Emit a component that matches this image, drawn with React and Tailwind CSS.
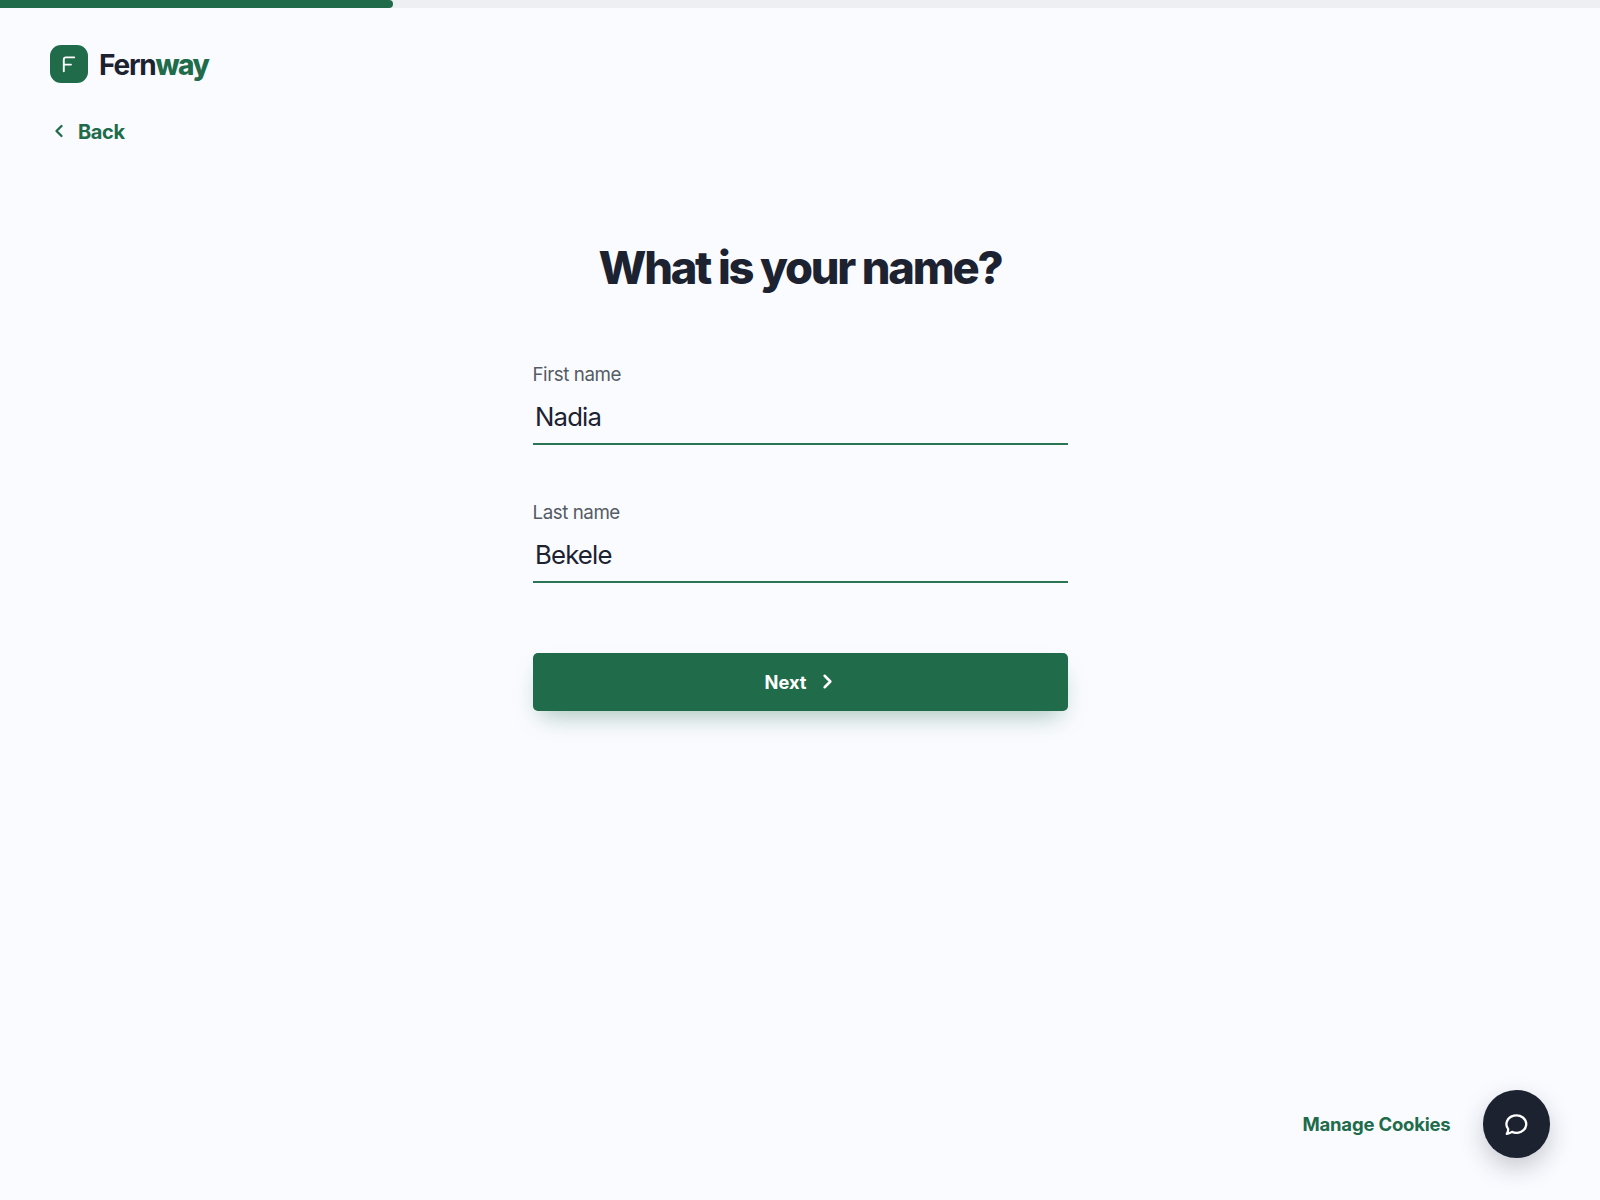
import React, { useState } from 'react';

const Chevron = ({ direction, className }) => (
  <svg viewBox="0 0 24 24" fill="none" stroke="currentColor" strokeLinecap="round" strokeLinejoin="round" className={className}>
    <path d={direction === 'left' ? 'm15 18-6-6 6-6' : 'm9 18 6-6-6-6'} />
  </svg>
);

const Field = ({ id, label, value, onChange }) => (
  <div className="flex flex-col">
    <label htmlFor={id} className="text-[18.75px] leading-[25px] tracking-[-0.45px] text-[#555c66]">{label}</label>
    <input
      id={id}
      type="text"
      value={value}
      onChange={(e) => onChange(e.target.value)}
      className="mt-[7.5px] h-[50.5px] w-full border-b-2 border-[#2a7553] bg-transparent px-[2.5px] pb-[4px] text-[25.75px] tracking-[-0.85px] text-[#1c2230] outline-none"
    />
  </div>
);

const App = () => {
  const [firstName, setFirstName] = useState('Nadia');
  const [lastName, setLastName] = useState('Bekele');

  return (
    <div className="flex h-screen flex-col overflow-hidden bg-[#fafbff] font-['Inter',sans-serif] text-[#1c2230]">
      {/* Progress */}
      <div className="h-[7.5px] w-full shrink-0 bg-[#eeeff2]">
        <div className="h-full w-[392.5px] rounded-r-[4px] bg-[#206c4a]" />
      </div>

      <header className="flex flex-col items-start px-[50px] pt-[37.5px]">
        <div className="flex h-[37.5px] items-center gap-[11.5px]">
          <div className="size-[37.5px] rounded-[11px] bg-[#206c4a] text-white">
            <svg viewBox="0 0 37.5 37.5" fill="none" stroke="currentColor" strokeWidth="1.9" strokeLinecap="round" strokeLinejoin="round" className="size-full">
              <path d="M13.8 26.2V14.4a2 2 0 0 1 2-2h8.4M13.8 19.6h7.2" />
            </svg>
          </div>
          <span className="pt-[2px] text-[28px] font-bold leading-none tracking-[-1.2px]">
            Fern<span className="font-extrabold tracking-[-1.5px] text-[#206c4a]">way</span>
          </span>
        </div>
        <button className="mt-[35px] -ml-[1.5px] flex h-[28px] items-center gap-[9.5px] text-[20px] font-bold tracking-[-0.4px] text-[#206c4a]">
          <Chevron direction="left" className="mb-px size-5 stroke-[2.8]" />
          Back
        </button>
      </header>

      <main className="flex flex-1 flex-col items-center pt-[94px]">
        <h1 className="text-[45.25px] font-extrabold leading-[56px] tracking-[-2.2px]">What is your name?</h1>
        <form className="mt-[66px] flex w-[535px] flex-col" onSubmit={(e) => e.preventDefault()}>
          <div className="flex flex-col gap-[55px]">
            <Field id="first-name" label="First name" value={firstName} onChange={setFirstName} />
            <Field id="last-name" label="Last name" value={lastName} onChange={setLastName} />
          </div>
          <button className="mt-[70px] flex h-[58.75px] items-center justify-center gap-[10px] rounded-[5px] bg-[#206c4a] pt-px pl-[4px] text-[18.25px] font-bold text-white shadow-[0_12px_25px_-8px_rgba(32,108,74,0.4)]">
            Next
            <Chevron direction="right" className="mb-px size-[23px] stroke-[2.6]" />
          </button>
        </form>
      </main>

      <footer className="flex items-center justify-end gap-[32px] pr-[50px] pb-[42.5px]">
        <button className="pt-[2px] text-[18.5px] font-bold tracking-[-0.2px] text-[#206c4a]">Manage Cookies</button>
        <button aria-label="Open chat" className="flex size-[67.5px] items-center justify-center rounded-full bg-[#1c2230] text-white shadow-[0_10px_25px_rgba(28,34,48,0.22)]">
          <svg viewBox="0 0 28 28" fill="none" stroke="currentColor" strokeWidth="2.3" strokeLinecap="round" strokeLinejoin="round" className="size-7">
            <path d="M6.1 18.9A9.9 8.7 0 1 1 10 21.9C8.3 23 6.5 23.8 4.8 23.9 5.9 22.3 6.3 20.6 6.1 18.9Z" />
          </svg>
        </button>
      </footer>
    </div>
  );
};

export default App;
